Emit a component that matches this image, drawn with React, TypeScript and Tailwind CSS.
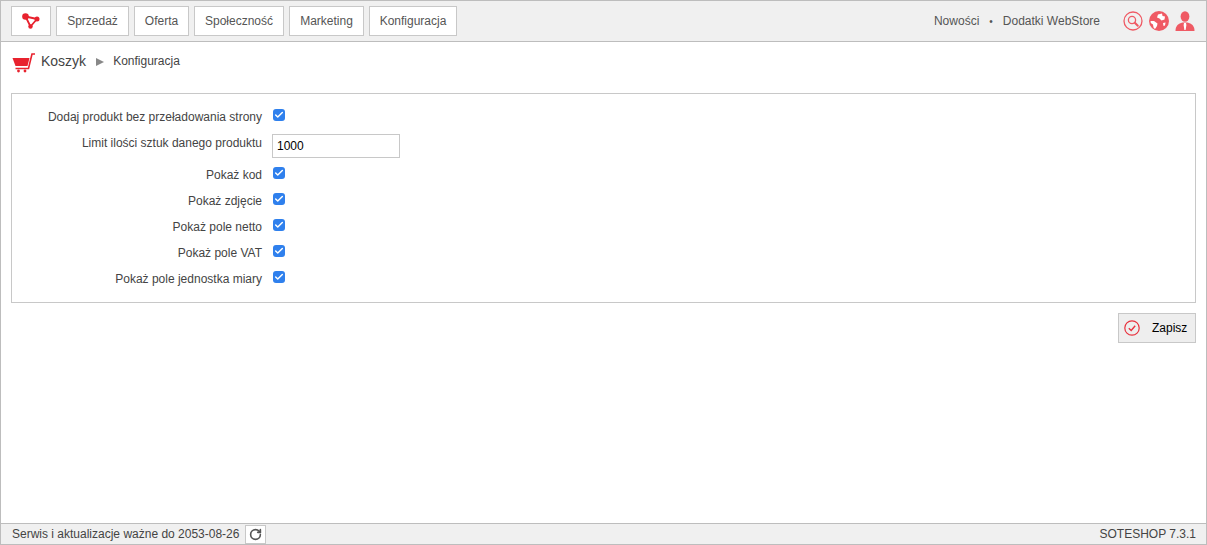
import { Check, RotateCw } from "lucide-react";

const font = "font-['Liberation_Sans',Arial,sans-serif]";
const menuItems = [
  { label: "Sprzedaż", width: "w-[73px]" },
  { label: "Oferta", width: "w-[55px]" },
  { label: "Społeczność", width: "w-[90px]" },
  { label: "Marketing", width: "w-[75px]" },
  { label: "Konfiguracja", width: "w-[88px]" },
];

function LogoIcon() {
  return (
    <svg width="18" height="16" viewBox="0 0 18 16" fill="none" aria-hidden="true">
      <path d="M3.5 3.5 L15 6 L8.5 13.5 Z" stroke="#e8222e" strokeWidth="1.8" strokeLinejoin="round" />
      <circle cx="3.5" cy="3.5" r="3.3" fill="#e8222e" />
      <circle cx="15" cy="6" r="2.5" fill="#e8222e" />
      <circle cx="8.5" cy="13.5" r="2.2" fill="#e8222e" />
    </svg>
  );
}

function CartIcon() {
  return (
    <svg width="24" height="20" viewBox="0 0 24 20" aria-hidden="true">
      <path d="M0.5 5 H17.5 L15.5 13 H3.5 Z" fill="#e8222e" />
      <path d="M23 1 H20 L16.5 15.5 H3.5" fill="none" stroke="#e8222e" strokeWidth="1.6" />
      <circle cx="6.5" cy="18" r="1.4" fill="#e8222e" />
      <circle cx="13" cy="18" r="1.4" fill="#e8222e" />
    </svg>
  );
}

function SearchIcon() {
  return (
    <svg width="20" height="20" viewBox="0 0 20 20" fill="none" stroke="#ef5a64" aria-hidden="true">
      <circle cx="10" cy="10" r="9" strokeWidth="1.3" />
      <circle cx="9" cy="9" r="3.6" strokeWidth="1.3" />
      <path d="M11.8 11.8 L14.8 14.8" strokeWidth="2" strokeLinecap="round" />
    </svg>
  );
}

function GlobeIcon() {
  return (
    <svg width="20" height="20" viewBox="0 0 20 20" aria-hidden="true">
      <circle cx="10" cy="10" r="10" fill="#ef5a64" />
      <path d="M9 3.5 L13 2.5 L13.5 5 L16 5.5 L15.5 8.5 L12.5 9.5 L10.5 7.5 L8 6.5 Z" fill="#fff" />
      <path d="M1.5 10 L5 10 L8.5 12.5 L8 15 L6 18 L4.5 16.5 L4 13.5 L1.8 12 Z" fill="#fff" />
      <path d="M14 12 L16.5 11.5 L16 14.5 L14.5 15 Z" fill="#fff" />
    </svg>
  );
}

function UserIcon() {
  return (
    <svg width="20" height="20" viewBox="0 0 20 20" aria-hidden="true">
      <ellipse cx="10" cy="5.5" rx="4.4" ry="5.2" fill="#ef5a64" />
      <path d="M0.5 20 C0.5 14.5 3.5 12.5 7.5 11.5 H12.5 C16.5 12.5 19.5 14.5 19.5 20 Z" fill="#ef5a64" />
      <path d="M9 12 H11 L11.4 14 L10.6 19 H9.4 L8.6 14 Z" fill="#fff" />
    </svg>
  );
}

function SaveIcon() {
  return (
    <svg width="16" height="16" viewBox="0 0 16 16" fill="none" stroke="#e8323e" aria-hidden="true">
      <circle cx="8" cy="8" r="7.2" strokeWidth="1.2" />
      <path d="M4.8 8.2 L7.2 10.5 L11.2 5.8" strokeWidth="1.4" />
    </svg>
  );
}

function Checkbox() {
  return (
    <span className="flex h-[12px] w-[12px] items-center justify-center rounded-[3px] bg-[#2f80ed]">
      <Check className="h-[10px] w-[10px] text-white" strokeWidth={3.5} />
    </span>
  );
}

function CheckboxRow({ label }: { label: string }) {
  return (
    <div className="flex h-[26px] items-center">
      <label className="w-[250px] pt-[2px] text-right text-[12px] text-[#444]">{label}</label>
      <span className="mb-[2px] ml-[11px]">
        <Checkbox />
      </span>
    </div>
  );
}

export default function App() {
  return (
    <div className={`${font} flex h-[545px] w-[1207px] flex-col border border-[#bdbdbd] bg-white`}>
      <header className="flex h-[41px] shrink-0 items-center border-b border-[#bdbdbd] bg-[#f0f0f0] pl-[10px] pr-[11px]">
        <nav className="flex items-center gap-[5px]">
          <button className="flex h-[30px] w-[40px] items-center justify-center border border-[#c8c8c8] bg-white" type="button">
            <LogoIcon />
          </button>
          {menuItems.map((item) => (
            <button className={`h-[30px] border border-[#c8c8c8] bg-white text-[12px] text-[#555] ${item.width}`} key={item.label} type="button">
              {item.label}
            </button>
          ))}
        </nav>
        <div className="ml-auto flex items-center text-[12px] text-[#555]">
          <span>Nowości</span>
          <span className="mx-[10px] text-[10px]">•</span>
          <span>Dodatki WebStore</span>
          <div className="ml-[23px] flex items-center gap-[6px]">
            <SearchIcon />
            <GlobeIcon />
            <UserIcon />
          </div>
        </div>
      </header>

      <main className="flex min-h-0 flex-1 flex-col px-[10px]">
        <div className="flex h-[38px] items-center pl-[1px]">
          <span className="mt-[4px]">
            <CartIcon />
          </span>
          <span className="ml-[5px] text-[14px] text-[#444]">Koszyk</span>
          <span className="ml-[10px] mr-[9px] mt-[1px] h-0 w-0 border-y-[4px] border-l-[8px] border-y-transparent border-l-[#888]" />
          <span className="text-[12px] text-[#444]">Konfiguracja</span>
        </div>

        <section className="mt-[13px] h-[210px] border border-[#c8c8c8] pt-[9px]">
          <CheckboxRow label="Dodaj produkt bez przeładowania strony" />
          <div className="flex h-[32px] items-center">
            <label className="w-[250px] pb-[4px] text-right text-[12px] text-[#444]">Limit ilości sztuk danego produktu</label>
            <input
              className="ml-[10px] mt-[2px] h-[24px] w-[128px] border border-[#c8c8c8] px-[4px] text-[12px] text-black outline-none"
              defaultValue="1000"
              type="text"
            />
          </div>
          <CheckboxRow label="Pokaż kod" />
          <CheckboxRow label="Pokaż zdjęcie" />
          <CheckboxRow label="Pokaż pole netto" />
          <CheckboxRow label="Pokaż pole VAT" />
          <CheckboxRow label="Pokaż pole jednostka miary" />
        </section>

        <div className="mt-[10px] flex justify-end">
          <button className="flex h-[30px] w-[78px] items-center border border-[#c8c8c8] bg-[#eeeeee] pl-[5px] text-[12px] text-black" type="button">
            <SaveIcon />
            <span className="ml-[12px]">Zapisz</span>
          </button>
        </div>
      </main>

      <footer className="flex h-[21px] shrink-0 items-center justify-between border-t border-[#bdbdbd] bg-[#f0f0f0] pl-[11px] pr-[10px] text-[12px] text-[#444]">
        <div className="flex items-center">
          <span>Serwis i aktualizacje ważne do 2053-08-26</span>
          <span className="ml-[6px] flex h-[19px] w-[21px] items-center justify-center border border-[#c8c8c8] bg-white">
            <RotateCw className="h-[13px] w-[13px] text-[#555]" strokeWidth={3} />
          </span>
        </div>
        <span>SOTESHOP 7.3.1</span>
      </footer>
    </div>
  );
}
